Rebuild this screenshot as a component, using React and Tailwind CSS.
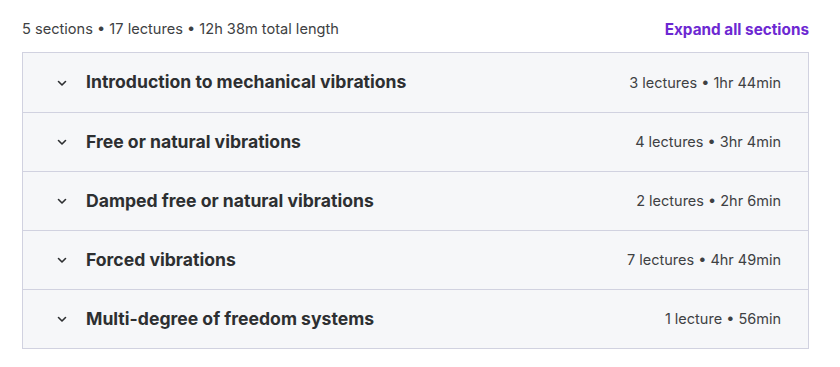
import React from "react";

const sections = [
  { title: "Introduction to mechanical vibrations", meta: "3 lectures • 1hr 44min" },
  { title: "Free or natural vibrations", meta: "4 lectures • 3hr 4min" },
  { title: "Damped free or natural vibrations", meta: "2 lectures • 2hr 6min" },
  { title: "Forced vibrations", meta: "7 lectures • 4hr 49min" },
  { title: "Multi-degree of freedom systems", meta: "1 lecture • 56min" },
];

function Chevron() {
  return (
    <svg width="12" height="12" viewBox="0 0 24 24" fill="none" stroke="#2d2f31" strokeWidth="3.2" strokeLinecap="round" strokeLinejoin="round">
      <path d="M5 9l7 7 7-7" />
    </svg>
  );
}

export default function App() {
  return (
    <div className="min-h-screen bg-white pl-[22px] pr-[31px] pt-[20px] text-[#2d2f31]" style={{ fontFamily: "Inter, 'Noto Sans', sans-serif" }}>
      {/* Summary line */}
      <div className="flex justify-between items-center h-5 mb-[12px]">
        <span className="text-[14.6px] text-[#3e4143]">5 sections • 17 lectures • 12h 38m total length</span>
        <span className="text-[15.3px] font-bold text-[#6d28d2]">Expand all sections</span>
      </div>

      {/* Sections */}
      <div className="border border-[#d1d2e0] bg-[#f6f7f9]">
        {sections.map((s, i) => (
          <div
            key={i}
            className={`flex items-center h-[59px] pl-[33px] pr-[27px] ${i > 0 ? "border-t border-[#d1d2e0]" : ""}`}
          >
            <Chevron />
            <span className="ml-[18px] flex-1 text-[17.6px] font-bold text-[#2d2f31]">{s.title}</span>
            <span className="text-[14.5px] text-[#3e4143]">{s.meta}</span>
          </div>
        ))}
      </div>
    </div>
  );
}
